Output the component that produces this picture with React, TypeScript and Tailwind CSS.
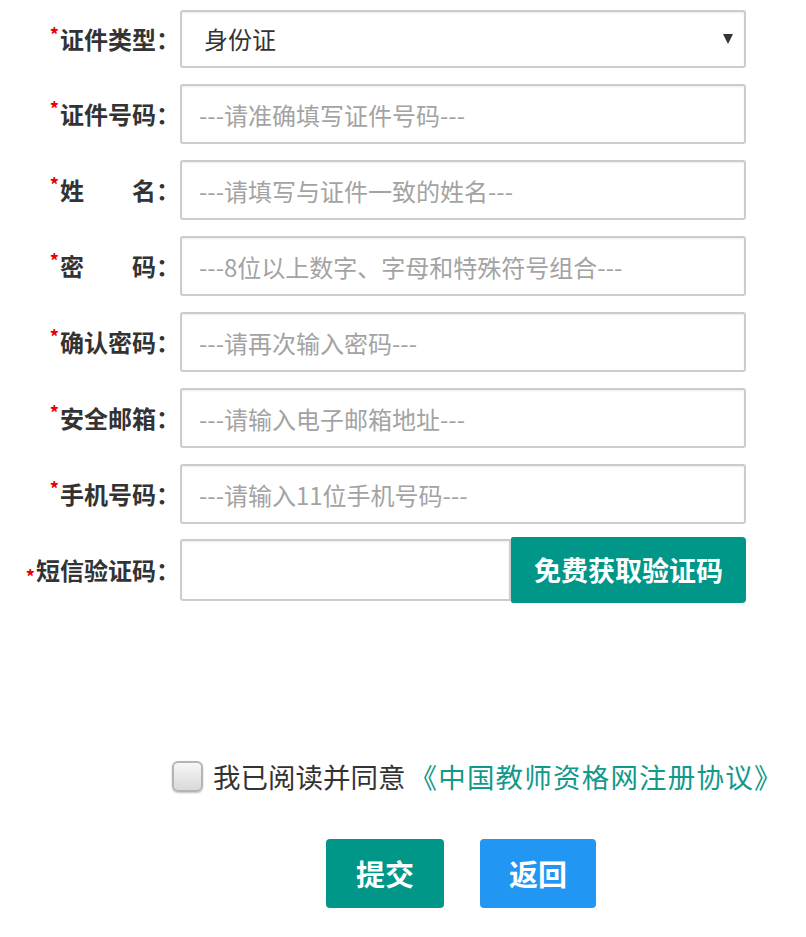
import { useState } from "react";

const fields = [
  { label: "证件号码", placeholder: "---请准确填写证件号码---" },
  { label: "姓\u3000\u3000名", placeholder: "---请填写与证件一致的姓名---" },
  { label: "密\u3000\u3000码", placeholder: "---8位以上数字、字母和特殊符号组合---" },
  { label: "确认密码", placeholder: "---请再次输入密码---" },
  { label: "安全邮箱", placeholder: "---请输入电子邮箱地址---" },
  { label: "手机号码", placeholder: "---请输入11位手机号码---" },
];

const inputClass =
  "h-full w-full rounded-[3px] border-2 border-[#cccccc] bg-white px-[17px] text-[24px] text-[#333] shadow-[inset_0_1px_2px_rgba(0,0,0,0.08)] outline-none placeholder:text-[#a3a3a3]";

function Label({ text }: { text: string }) {
  return (
    <label className="flex w-[180px] shrink-0 items-center justify-end whitespace-nowrap text-[24px] font-bold text-[#333]">
      <span className="mr-[1px] self-start pt-[15px] text-[18px] leading-none text-[#e60000]">*</span>
      {text}：
    </label>
  );
}

export default function App() {
  const [agree, setAgree] = useState(false);

  return (
    <section
      className="min-h-screen w-full bg-white pt-[10px]"
      style={{ fontFamily: '"Noto Sans CJK SC", "Noto Sans", sans-serif' }}
    >
      <div className="flex w-[746px] flex-col gap-[16px]">
        <div className="flex h-[58px] items-stretch">
          <Label text="证件类型" />
          <div className="relative flex-1">
            <select className={inputClass + " appearance-none pl-[22px]"} defaultValue="sfz">
              <option value="sfz">身份证</option>
            </select>
            <span className="pointer-events-none absolute right-[13px] top-[24px] h-0 w-0 border-x-[5px] border-t-[10px] border-x-transparent border-t-[#333]" />
          </div>
        </div>

        {fields.map((f) => (
          <div key={f.label} className="flex h-[60px] items-stretch">
            <Label text={f.label} />
            <div className="flex-1">
              <input type="text" placeholder={f.placeholder} className={inputClass} />
            </div>
          </div>
        ))}

        <div className="-mt-[3px] flex h-[66px] items-center">
          <Label text="短信验证码" />
          <div className="flex flex-1 items-center">
            <div className="h-[62px] w-[331px]">
              <input type="text" className={inputClass + " rounded-r-none"} />
            </div>
            <button className="h-[66px] flex-1 rounded-r-[4px] rounded-l-[2px] bg-[#009688] text-[27px] font-bold text-white">
              免费获取验证码
            </button>
          </div>
        </div>
      </div>

      <div className="mt-[158px] flex items-center pl-[172px]">
        <button
          onClick={() => setAgree(!agree)}
          className="flex h-[31px] w-[31px] items-center justify-center rounded-[6px] border-2 border-[#b5b5b5] bg-gradient-to-b from-[#f7f7f7] to-[#d9d9d9] shadow-[0_1px_2px_rgba(0,0,0,0.25)]"
        >
          {agree && <span className="text-[20px] leading-none text-[#333]">✓</span>}
        </button>
        <p className="ml-[10px] whitespace-nowrap text-[27.5px] leading-none text-[#333]">
          我已阅读并同意
          <a className="ml-[4px] tracking-[1.2px] text-[#13998a]">《中国教师资格网注册协议》</a>
        </p>
      </div>

      <div className="mt-[47px] flex w-[742px] justify-center gap-[36px] pl-[180px]">
        <button className="h-[69px] w-[118px] rounded-[4px] bg-[#009688] text-[29px] font-bold text-white">
          提交
        </button>
        <button className="h-[69px] w-[116px] rounded-[4px] bg-[#2196f3] text-[29px] font-bold text-white">
          返回
        </button>
      </div>
    </section>
  );
}
